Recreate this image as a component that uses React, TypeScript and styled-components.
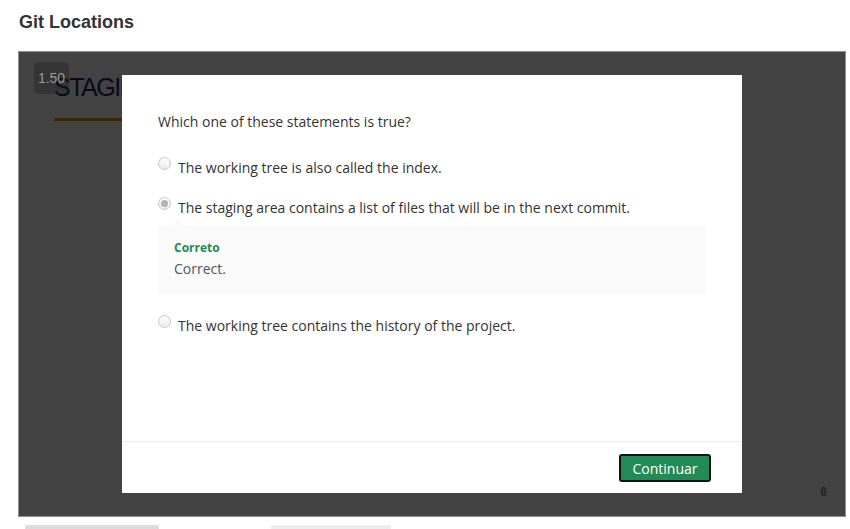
import styled, { createGlobalStyle } from "styled-components";

const GlobalStyle = createGlobalStyle`
	body {
		margin: 0;
		background: #fff;
		font-family: "Open Sans", "Liberation Sans", sans-serif;
	}
`;

interface Option {
	text: string;
	checked?: boolean;
	feedback?: { title: string; body: string };
}

const options: Option[] = [
	{ text: "The working tree is also called the index." },
	{
		text: "The staging area contains a list of files that will be in the next commit.",
		checked: true,
		feedback: { title: "Correto", body: "Correct." }
	},
	{ text: "The working tree contains the history of the project." }
];

function App() {
	return (
		<Page>
			<GlobalStyle />
			<Title>Git Locations</Title>

			<Player>
				<Slide>
					<SlideHeading>STAGING AREA</SlideHeading>
					<SlideRule />
				</Slide>
				<Overlay />
				<Speed>1.50</Speed>
				<PageNumber>6</PageNumber>

				<Modal>
					<ModalBody>
						<Question>Which one of these statements is true?</Question>
						<OptionList>
							{options.map(option => (
								<li key={option.text}>
									<OptionRow>
										<Radio checked={!!option.checked} />
										<OptionText>{option.text}</OptionText>
									</OptionRow>
									{option.feedback && (
										<Feedback>
											<FeedbackTitle>{option.feedback.title}</FeedbackTitle>
											<FeedbackBody>{option.feedback.body}</FeedbackBody>
										</Feedback>
									)}
								</li>
							))}
						</OptionList>
					</ModalBody>
					<ModalFooter>
						<ContinueButton>Continuar</ContinueButton>
					</ModalFooter>
				</Modal>
			</Player>

			<Toolbar>
				<ToolbarTab wide />
				<ToolbarTab />
			</Toolbar>
		</Page>
	);
}

const Page = styled.div`
	padding: 0 4px 0 18px;
`;

const Title = styled.h1`
	margin: 0;
	padding: 11px 0 0 1px;
	height: 40px;
	box-sizing: border-box;
	font-family: "Liberation Sans", Arial, sans-serif;
	font-size: 18px;
	font-weight: 700;
	color: #333;
	line-height: 22px;
`;

const Player = styled.div`
	position: relative;
	margin-top: 11px;
	width: 828px;
	height: 466px;
	box-sizing: border-box;
	border: 1px solid #8f8f8f;
	overflow: hidden;
`;

const Slide = styled.div`
	height: 100%;
	background: #fff;
	padding: 20px 0 0 35px;
	box-sizing: border-box;
`;

const SlideHeading = styled.div`
	font-family: "Liberation Sans", Arial, sans-serif;
	font-size: 25px;
	line-height: 30px;
	color: #1a2a6c;
	letter-spacing: -1.5px;
	white-space: nowrap;
`;

const SlideRule = styled.div`
	margin-top: 16px;
	width: 400px;
	height: 3px;
	background: #d49a18;
`;

const Overlay = styled.div`
	position: absolute;
	inset: 0;
	background: rgba(0, 0, 0, 0.737);
`;

const Speed = styled.div`
	position: absolute;
	left: 15px;
	top: 10px;
	width: 35px;
	height: 32px;
	border-radius: 5px;
	background: rgba(30, 30, 30, 0.35);
	color: #9a9a9a;
	font-family: "Liberation Sans", Arial, sans-serif;
	font-size: 14px;
	line-height: 32px;
	text-align: center;
`;

const PageNumber = styled.div`
	position: absolute;
	right: 18px;
	bottom: 17px;
	font-family: "Liberation Sans", Arial, sans-serif;
	font-size: 12px;
	font-weight: 700;
	color: #222;
`;

const Modal = styled.div`
	position: absolute;
	left: 103px;
	top: 23px;
	width: 620px;
	height: 418px;
	background: #fff;
	display: flex;
	flex-direction: column;
`;

const ModalBody = styled.div`
	flex: 1;
	padding: 36px 36px 0;
`;

const Question = styled.p`
	margin: 0;
	font-size: 14px;
	line-height: 22px;
	color: #333;
`;

const OptionList = styled.ul`
	list-style: none;
	margin: 24px 0 0;
	padding: 0;

	li + li {
		margin-top: 19px;
	}
`;

const OptionRow = styled.div`
	display: flex;
	align-items: flex-start;
	gap: 7px;
`;

const Radio = styled.span<{ checked: boolean }>`
	position: relative;
	flex: none;
	width: 13px;
	height: 13px;
	box-sizing: border-box;
	border-radius: 50%;
	border: 1px solid #c8c8c8;
	background: linear-gradient(#fdfdfd, #ececec);

	&::after {
		content: "";
		display: ${props => (props.checked ? "block" : "none")};
		position: absolute;
		left: 2px;
		top: 2px;
		width: 7px;
		height: 7px;
		border-radius: 50%;
		background: #b4b4b4;
	}
`;

const OptionText = styled.span`
	margin-top: 1px;
	font-size: 14px;
	line-height: 20px;
	color: #333;
`;

const Feedback = styled.div`
	position: relative;
	margin-top: 8px;
	margin-bottom: 21px;
	height: 68px;
	box-sizing: border-box;
	padding: 12px 16px 0;
	background: #fafafa;

	&::before {
		content: "";
		position: absolute;
		left: 12px;
		top: -8px;
		border-left: 8px solid transparent;
		border-right: 8px solid transparent;
		border-bottom: 8px solid #fafafa;
	}
`;

const FeedbackTitle = styled.div`
	font-size: 12px;
	font-weight: 700;
	line-height: 20px;
	color: #1f8a4f;
`;

const FeedbackBody = styled.div`
	font-size: 14px;
	line-height: 22px;
	color: #555;
`;

const ModalFooter = styled.div`
	height: 52px;
	box-sizing: border-box;
	border-top: 1px solid #ececec;
	display: flex;
	align-items: center;
	justify-content: flex-end;
	padding: 1px 31px 0;
`;

const ContinueButton = styled.button`
	width: 92px;
	height: 28px;
	border: 2px solid #111;
	border-radius: 3px;
	background: #218a55;
	color: #fff;
	font-family: "Open Sans", "Liberation Sans", sans-serif;
	font-size: 14px;
	padding: 0;
	cursor: pointer;
`;

const Toolbar = styled.div`
	display: flex;
	gap: 112px;
	padding: 8px 0 0 7px;
`;

const ToolbarTab = styled.div<{ wide?: boolean }>`
	width: ${props => (props.wide ? "134px" : "120px")};
	height: 20px;
	border-radius: 2px;
	background: ${props => (props.wide ? "#dcdcdc" : "#eeeeee")};
`;

export default App;
